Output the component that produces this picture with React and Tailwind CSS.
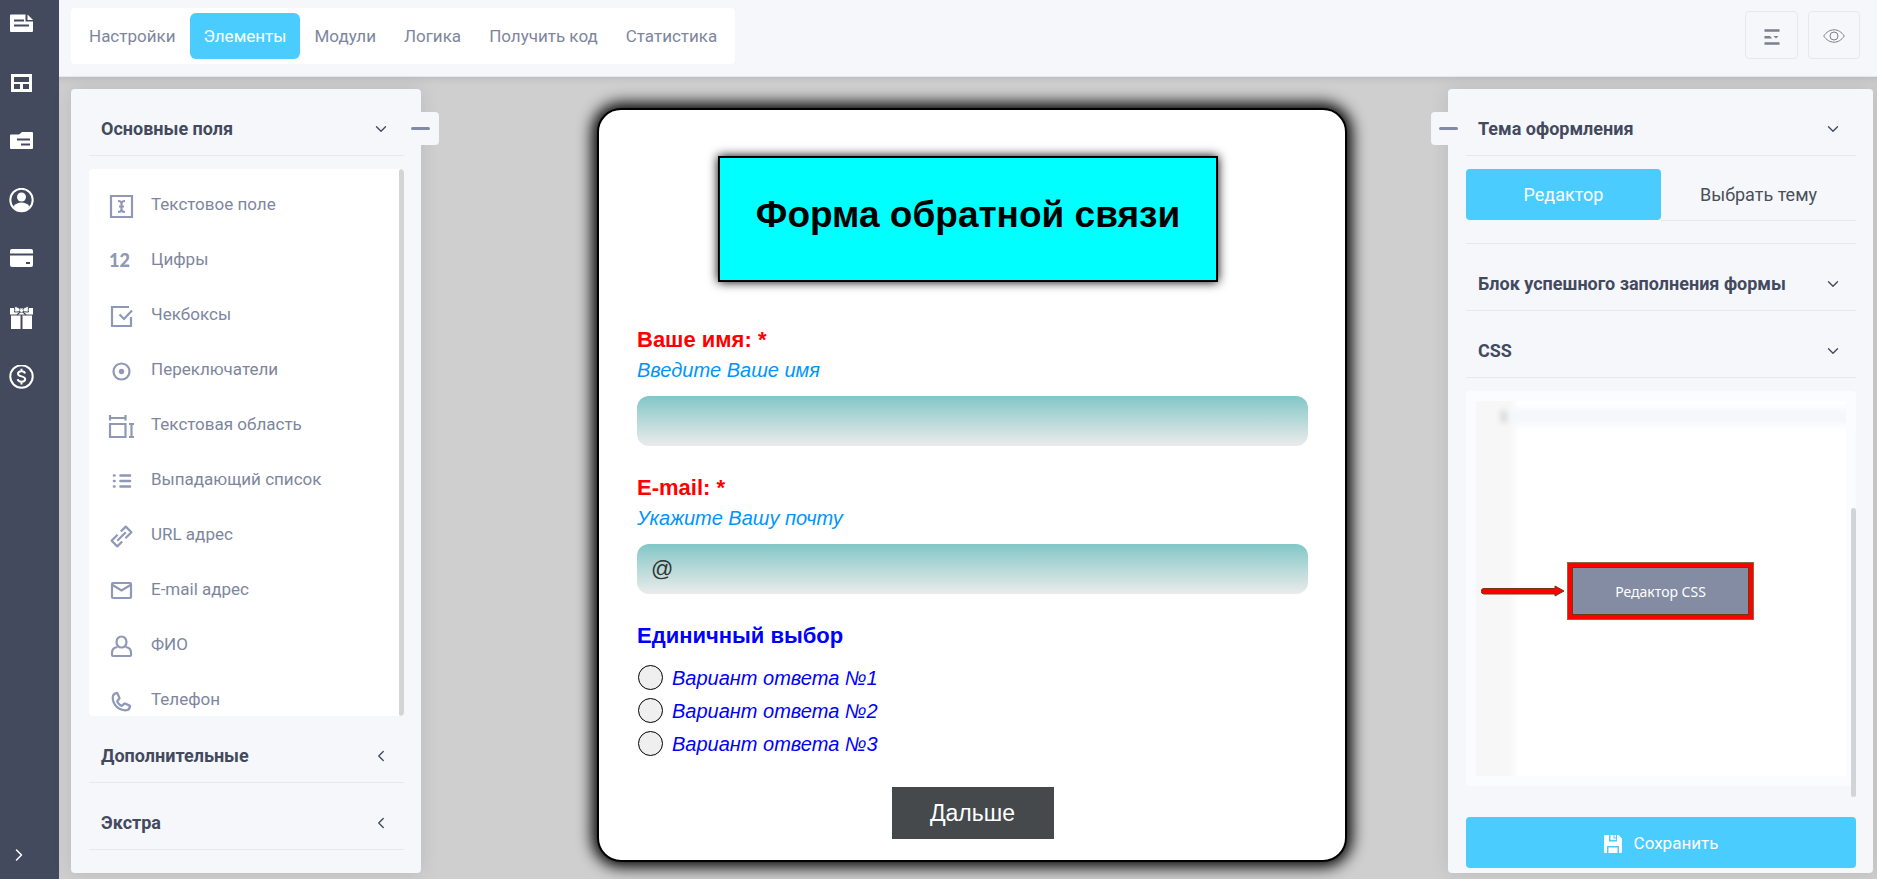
import { useState } from 'react'
import { ChevronDown, ChevronLeft, ChevronRight } from 'lucide-react'
import { PiPhoneBold } from 'react-icons/pi'

const TABS = ['Настройки', 'Элементы', 'Модули', 'Логика', 'Получить код', 'Статистика']

/* Sidebar icons, drawn on a 25x25 grid */
const SIDEBAR = [
  {
    label: 'Формы',
    icon: (
      <>
        <path fill="currentColor" d="M2 3.500h14.500V10.500h7.500V20a1 1 0 0 1-1 1H2a1 1 0 0 1-1-1V4.500a1 1 0 0 1 1-1z" />
        <path fill="currentColor" d="M18.500 3.500L24 9h-5.500z" />
        <path stroke="#434a5e" strokeWidth="2" d="M5 9.500h10M5 14.500h15" />
      </>
    ),
  },
  {
    label: 'Шаблоны',
    icon: (
      <path
        fill="currentColor"
        fillRule="evenodd"
        d="M2 4h21v18H2zM5 7v5h15V7zM5 14v5h6v-5zM14 14v5h6v-5z"
      />
    ),
  },
  {
    label: 'Заявки',
    icon: (
      <>
        <path fill="currentColor" d="M2 5.500h8L13 3h10a1 1 0 0 1 1 1v15a1 1 0 0 1-1 1H2a1 1 0 0 1-1-1V6.500a1 1 0 0 1 1-1z" />
        <path stroke="#434a5e" strokeWidth="2" d="M8 10.500h13M12 15.500h9" />
      </>
    ),
  },
  {
    label: 'Профиль',
    icon: (
      <>
        <circle cx="12.500" cy="12" r="11.200" fill="none" stroke="currentColor" strokeWidth="2" />
        <circle cx="12.500" cy="9" r="4.500" fill="currentColor" />
        <path fill="currentColor" d="M4.500 18.500c2-3 5-4 8-4s6 1 8 4c-2 3-5 4.500-8 4.500s-6-1.500-8-4.500z" />
      </>
    ),
  },
  {
    label: 'Оплата',
    icon: (
      <>
        <path fill="currentColor" d="M3 2h19a2 2 0 0 1 2 2v2.500H1V4a2 2 0 0 1 2-2z" />
        <path fill="currentColor" d="M1 8.500h23V18a2 2 0 0 1-2 2H3a2 2 0 0 1-2-2z" />
        <path stroke="#434a5e" strokeWidth="2" d="M17 16h4" />
      </>
    ),
  },
  {
    label: 'Бонусы',
    icon: (
      <>
        <path fill="currentColor" d="M1 2h23v6.500H1zM2 8h9.500v15H2zM13.500 8H23v15h-9.500z" />
        <path stroke="#434a5e" strokeWidth="1" d="M2 9h9.500M13.500 9H23" />
        <path
          fill="#fff"
          stroke="#434a5e"
          strokeWidth="1"
          d="M12.500 4.500C10.500 2 8 .5 5.500.5c0 2 .5 3.500 0 5.500 2.500 0 5 0 7-1.500zM12.500 4.500C14.500 2 17 .5 19.500.5c0 2-.5 3.500 0 5.500-2.500 0-5 0-7-1.500z"
        />
        <path stroke="#434a5e" strokeWidth="1.200" d="M11.500 5.500L8 9M13.500 5.500L17 9" />
        <circle cx="12.500" cy="4.500" r="2" fill="#fff" stroke="#434a5e" strokeWidth=".6" />
      </>
    ),
  },
  {
    label: 'Партнёрам',
    icon: (
      <>
        <circle cx="12.500" cy="11.500" r="11.200" fill="none" stroke="currentColor" strokeWidth="2" />
        <path
          fill="none"
          stroke="currentColor"
          strokeWidth="2"
          d="M16 8.500c-.3-1.500-1.600-2.300-3.500-2.300S9 7.100 9 8.700c0 3.600 7.200 1.800 7.200 5.400 0 1.700-1.500 2.700-3.700 2.700S8.900 15.800 8.700 14.200M12.500 3.700v3M12.500 16.500v3"
        />
      </>
    ),
  },
]

/* Form elements of the left panel, icons on a 24x24 grid */
const ELEMENTS = [
  {
    label: 'Текстовое поле',
    icon: (
      <>
        <path d="M2 1h21v21H2z" />
        <path d="M9 6c2 0 3.500.800 3.500 2.500v6c0 1.700-1.500 2.500-3.500 2.500M16 6c-2 0-3.500.800-3.500 2.500v6c0 1.700 1.500 2.500 3.500 2.500M10 11.500h5" />
      </>
    ),
  },
  { label: 'Цифры', text: '12' },
  {
    label: 'Чекбоксы',
    icon: <path d="M20 2H3v19h19v-9M10.500 9.500l4.500 4.500 8-8.500" />,
  },
  {
    label: 'Переключатели',
    icon: (
      <>
        <circle cx="12.500" cy="11.500" r="8" />
        <circle cx="12.500" cy="11.500" r="2.700" fill="currentColor" stroke="none" />
      </>
    ),
  },
  {
    label: 'Текстовая область',
    icon: <path d="M1 3h15M1 0v5.500M16.500 0v5.500M1 9h15.500v13H1zM20 9h5M20 22h5M22.500 9v13" />,
  },
  {
    label: 'Выпадающий список',
    icon: (
      <path
        strokeLinecap="round"
        strokeWidth="2.600"
        d="M5 5.500h.5M5 11h.5M5 16.500h.5M11.500 5.500H21M11.500 11H21M11.500 16.500H21"
      />
    ),
  },
  {
    label: 'URL адрес',
    icon: (
      <g transform="translate(12.5 11.500) rotate(-45)" strokeWidth="2.200" strokeLinejoin="round">
        <path d="M-1.500-4H-10v8h7M1.500 4H10v-8h-7M-6 0h12" />
      </g>
    ),
  },
  {
    label: 'E-mail адрес',
    icon: (
      <>
        <rect x="3" y="3" width="19" height="15" rx="1" />
        <path d="M3.500 5l9 5.500 9-5.500" />
      </>
    ),
  },
  {
    label: 'ФИО',
    icon: (
      <>
        <ellipse cx="12.500" cy="7" rx="5" ry="5.500" />
        <path d="M8.500 12C5 12.500 3 14.500 3 17.500V20a1 1 0 0 0 1 1h17a1 1 0 0 0 1-1v-2.500c0-3-2-5-5.500-5.500" />
      </>
    ),
  },
  { label: 'Телефон', icon: 'phone' },
]

function ElementIcon({ item }) {
  if (item.text) {
    return <span className="w-6 font-[Lato] text-lg leading-6 font-black text-left text-[#8f98b5]">{item.text}</span>
  }
  if (item.icon === 'phone') {
    return <PiPhoneBold className="w-6 h-6 mt-1 text-[#8f98b5]" />
  }
  return (
    <svg viewBox="0 0 24 24" className="w-6 h-6 mt-1 overflow-visible text-[#8f98b5]" fill="none" stroke="currentColor" strokeWidth="2.200">
      {item.icon}
    </svg>
  )
}

function SectionHeader({ title, open = true }) {
  const Icon = open ? ChevronDown : ChevronLeft
  return (
    <button className="w-full flex items-center justify-between shrink-0 pl-3 pr-[14px] pt-7 pb-[14px] border-b border-[#e6e8ee] text-left">
      <span className="text-lg leading-6 font-bold text-[#434a5e]">{title}</span>
      <Icon className="w-[18px] h-[18px] text-[#434a5e]" strokeWidth={1.8} />
    </button>
  )
}

function CollapseButton({ className }) {
  return (
    <button
      aria-label="Свернуть панель"
      className={`absolute top-[23px] h-[33px] flex items-center rounded bg-[#f6f7fb] ${className}`}
    >
      <span className="w-[19px] h-[3px] rounded-full bg-[#828ba5]" />
    </button>
  )
}

function Sidebar() {
  return (
    <aside className="w-[59px] shrink-0 flex flex-col justify-between pt-[11px] pb-3 pl-[9px] bg-[#434a5e] text-white">
      <nav className="flex flex-col gap-[34px]">
        {SIDEBAR.map((item) => (
          <a key={item.label} href="#" aria-label={item.label} className="w-[25px] h-[25px]">
            <svg viewBox="0 0 25 25" className="w-[25px] h-[25px]">{item.icon}</svg>
          </a>
        ))}
      </nav>
      <button aria-label="Развернуть меню" className="w-5 h-6 flex items-center justify-center">
        <ChevronRight className="w-5 h-5 shrink-0" strokeWidth={1.8} />
      </button>
    </aside>
  )
}

function TopBar() {
  const [tab, setTab] = useState('Элементы')

  return (
    <header className="flex items-start justify-between shrink-0 pt-2 pb-3 pl-3 pr-[17px] border-b border-[#e6e8ee] bg-[#f6f7fb]">
      <nav className="flex px-1 py-[5px] rounded bg-white">
        {TABS.map((name) => (
          <button
            key={name}
            onClick={() => setTab(name)}
            className={`h-[46px] px-[14px] rounded-md text-[17px] leading-6 whitespace-nowrap ${tab === name ? 'bg-[#4bccff] text-white' : 'text-[#7e869d]'}`}
          >
            {name}
          </button>
        ))}
      </nav>
      <div className="flex gap-[10px] pt-[3px] text-[#7b808c]">
        <button aria-label="Структура" className="w-[53px] h-12 flex items-center justify-center rounded border border-[#e6e8ee]">
          <svg viewBox="0 0 16 16" className="w-4 h-4 mt-1">
            <path stroke="currentColor" strokeWidth="2.400" d="M.5 1.500h15M.5 14.500h15" />
            <path fill="currentColor" d="M.5 7H6l2 2.400H.5zM9.500 7h5L12 9.500z" />
          </svg>
        </button>
        <button aria-label="Просмотр" className="w-[52px] h-12 flex items-center justify-center rounded border border-[#e6e8ee]">
          <svg viewBox="0 0 22 14" className="w-[22px] h-[14px] mt-px" fill="none" stroke="currentColor">
            <path d="M.7 7C3.500 3 7 .8 11 .8S18.500 3 21.300 7C18.500 11 15 13.200 11 13.200S3.500 11 .7 7z" />
            <circle cx="11" cy="7" r="4" />
          </svg>
        </button>
      </div>
    </header>
  )
}

function ElementsPanel() {
  return (
    <section className="relative w-[350px] shrink-0 flex flex-col pl-[18px] pr-[17px] pb-[23px] rounded bg-[#f6f7fb] shadow-[0_0_20px_rgba(0,0,0,0.1)]">
      <CollapseButton className="-right-[18px] w-9 pl-2" />
      <SectionHeader title="Основные поля" />
      <div className="flex-1 min-h-0 flex mt-[13px] rounded bg-white overflow-hidden">
        <ul className="flex-1 pt-2">
          {ELEMENTS.map((item) => (
            <li key={item.label}>
              <button className="h-[55px] flex items-center gap-[18px] px-5 text-[17px] text-[#7e869d]">
                <ElementIcon item={item} />
                {item.label}
              </button>
            </li>
          ))}
        </ul>
        <div className="w-[5px] rounded bg-[#d3d4d4]" />
      </div>
      <SectionHeader title="Дополнительные" open={false} />
      <SectionHeader title="Экстра" open={false} />
    </section>
  )
}

function FormField({ id, label, hint, value }) {
  return (
    <div className="flex flex-col mb-[26px]">
      <label htmlFor={id} className="text-[22px] leading-[31px] font-bold text-[#ff0000]">{label} *</label>
      <span className="text-xl leading-[31px] italic text-[#0094ff]">{hint}</span>
      <input
        id={id}
        defaultValue={value}
        className="h-[50px] mt-[10px] px-[14px] rounded-xl bg-linear-to-b from-[#80c7c7] to-[#ebebeb] text-[22px] text-[#333333] outline-none"
      />
    </div>
  )
}

function FormPreview() {
  const [choice, setChoice] = useState(null)

  return (
    <form
      onSubmit={(e) => e.preventDefault()}
      className="w-full max-w-[750px] mt-[19px] flex flex-col pl-[38px] pr-[37px] pt-[46px] pb-[21px] border-2 border-black rounded-3xl bg-white shadow-[0_0_15px_5px_#000000] font-['Liberation_Sans',sans-serif]"
    >
      <h1 className="self-center w-[500px] h-[126px] mr-[9px] mb-[42px] pt-[35px] border-2 border-black bg-[#00ffff] shadow-[0_0_10px_#000000] text-center text-[37px] leading-[44px] font-bold text-black">
        Форма обратной связи
      </h1>

      <FormField id="name" label="Ваше имя:" hint="Введите Ваше имя" value="" />
      <FormField id="email" label="E-mail:" hint="Укажите Вашу почту" value="@" />

      <fieldset className="text-[#0000ff]">
        <legend className="text-[22px] leading-[31px] font-bold mb-[10px]">Единичный выбор</legend>
        {[1, 2, 3].map((n) => (
          <label key={n} className="flex items-center gap-[9px] h-[33px] text-xl italic">
            <input
              type="radio"
              name="choice"
              checked={choice === n}
              onChange={() => setChoice(n)}
              className="appearance-none w-[25px] h-[25px] ml-px rounded-full border border-black bg-[#efefef] checked:bg-[#0000ff]"
            />
            Вариант ответа №{n}
          </label>
        ))}
      </fieldset>

      <button className="self-center w-[162px] h-[52px] mt-[27px] bg-[#45494c] text-[23px] text-white">Дальше</button>
    </form>
  )
}

function ThemePanel() {
  return (
    <section className="relative w-[425px] shrink-0 flex flex-col pl-[18px] pr-[17px] pb-[5px] rounded bg-[#f6f7fb] shadow-[0_0_20px_rgba(0,0,0,0.1)]">
      <CollapseButton className="-left-[17px] w-9 pl-2" />
      <div className="relative flex-1 min-h-0 overflow-hidden">
        <SectionHeader title="Тема оформления" />
        <div className="grid grid-cols-2 mt-[13px] mb-[22px] text-lg">
          <button className="h-[51px] rounded bg-[#4bccff] text-white">Редактор</button>
          <button className="h-[52px] border-b border-[#e6e8ee] text-[#495057]">Выбрать тему</button>
        </div>
        <div className="border-t border-[#e6e8ee]" />
        <SectionHeader title="Блок успешного заполнения формы" />
        <SectionHeader title="CSS" />

        <div className="mt-[13px] p-[10px] rounded bg-[#fbfcff]">
          <div className="relative h-[375px] flex items-center justify-center pt-[5px] pr-px bg-white overflow-hidden">
            {/* Blurred code editor behind the button */}
            <div className="absolute -inset-4 flex blur-[3px]">
              <div className="w-[54px] pt-6 pr-[6px] bg-[#f7f7f7] text-right font-['Liberation_Mono',monospace] text-sm leading-[17px] text-[#888888]">1</div>
              <div className="flex-1 h-[17px] mt-[23px] bg-[#f5f7fb]" />
            </div>
            <button className="relative w-[175px] h-[46px] pt-[2px] bg-[#838ca3] font-['Noto_Sans',sans-serif] text-sm text-white outline-1 outline-[#6b3a10] shadow-[0_0_0_5px_#ff0000,0_0_0_6px_#8a6a40]">
              Редактор CSS
            </button>
            <svg viewBox="0 0 84 12" className="absolute left-[5px] top-[184px] w-[84px] h-3">
              <path fill="#ff0000" stroke="#6b3a10" d="M3 3.500h71V1l9 5-9 5V9H3a2.700 2.700 0 0 1 0-5.500z" />
            </svg>
          </div>
        </div>
        <div className="absolute right-0 bottom-0 w-[5px] h-[289px] rounded-full bg-[#d3d4d8]" />
      </div>

      <button className="h-[51px] mt-5 pt-[2px] shrink-0 flex items-center justify-center gap-3 rounded bg-[#4bccff] text-[17px] text-white">
        <svg viewBox="0 0 18 18" className="w-[18px] h-[18px]">
          <path fill="currentColor" d="M1 0h4v6.500h8V0h1.500L18 3.500V17a1 1 0 0 1-1 1h-2v-7H3v7H1a1 1 0 0 1-1-1V1a1 1 0 0 1 1-1zM6.500 0h3v3.500H12V5H6.500zM10.500 0H12v2.500h-1.500zM4.500 12.500h9V18h-9z" />
        </svg>
        Сохранить
      </button>
    </section>
  )
}

export default function App() {
  return (
    <div className="min-h-screen flex bg-[#cfcfcf] font-[Roboto,sans-serif]">
      <Sidebar />
      <div className="flex-1 min-w-0 flex flex-col h-screen">
        <TopBar />
        <main className="flex-1 min-h-0 flex pt-3 pb-[6px] pl-3 pr-1 shadow-[inset_0_6px_10px_-6px_rgba(0,0,0,0.15)]">
          <ElementsPanel />
          <div className="flex-1 min-w-0 flex justify-center items-start pl-[75px]">
            <FormPreview />
          </div>
          <ThemePanel />
        </main>
      </div>
    </div>
  )
}
